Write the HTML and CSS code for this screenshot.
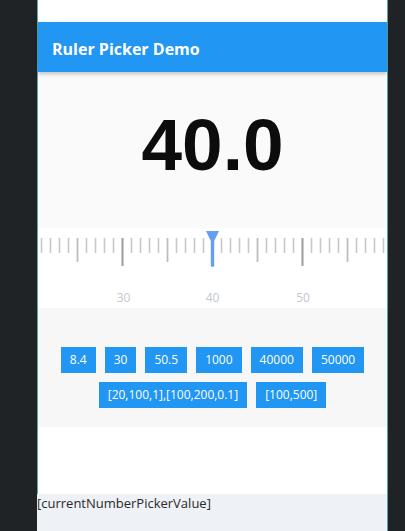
FILE: index.html
```html
<!DOCTYPE html>
<html>
<head>
<meta charset="utf-8">
<link rel="stylesheet" href="styles.css">
</head>
<body>
<div class="stage">
  <div class="side-left"></div>
  <div class="phone">
    <div class="status"></div>
    <header class="appbar">Ruler Picker Demo</header>
    <section class="display">
      <div class="value">40.0</div>
    </section>
    <section class="ruler">
      <svg class="ruler-svg" width="349" height="80" viewBox="0 0 349 80" xmlns="http://www.w3.org/2000/svg">
        <g id="ticks"></g>
        <g class="labels" font-size="12" fill="#c3c7cf" text-anchor="middle">
          <text x="85.5" y="74">30</text>
          <text x="174.5" y="74">40</text>
          <text x="265" y="74">50</text>
        </g>
        <path d="M168 3 L181 3 L176.2 13 L176.2 38 Q174.5 40 172.8 38 L172.8 13 Z" fill="#679ef3"/>
      </svg>
    </section>
    <section class="buttons">
      <div class="btn-row">
        <span class="btn">8.4</span>
        <span class="btn">30</span>
        <span class="btn">50.5</span>
        <span class="btn">1000</span>
        <span class="btn">40000</span>
        <span class="btn">50000</span>
      </div>
      <div class="btn-row">
        <span class="btn">[20,100,1],[100,200,0.1]</span>
        <span class="btn">[100,500]</span>
      </div>
    </section>
    <section class="blank"></section>
    <footer class="footer">[currentNumberPickerValue]</footer>
  </div>
  <div class="side-right"></div>
</div>
<script>
(function(){
  var g = document.getElementById('ticks');
  var ns = 'http://www.w3.org/2000/svg';
  for (var k = -19; k <= 19; k++) {
    var v = 40 + k;
    if (v === 40) continue;
    var x = 174.5 + 9 * k;
    var l = document.createElementNS(ns, 'line');
    var y2 = 25, c = '#c9c9c9', w = 1.6;
    if (v % 10 === 0) { y2 = 38; c = '#9c9c9c'; w = 2; }
    else if (v % 5 === 0) { y2 = 34; c = '#bdbdbd'; w = 1.8; }
    l.setAttribute('x1', x); l.setAttribute('x2', x);
    l.setAttribute('y1', 10); l.setAttribute('y2', y2);
    l.setAttribute('stroke', c); l.setAttribute('stroke-width', w);
    g.appendChild(l);
  }
})();
</script>
</body>
</html>
```

FILE: styles.css
```css
html, body {
  margin: 0;
  padding: 0;
  background: #1f2326;
  height: 100%;
  overflow: hidden;
}

.stage {
  display: flex;
  height: 531px;
}

.side-left {
  width: 37px;
  flex: none;
}

.side-right {
  flex: 1;
}

.phone {
  width: 349px;
  flex: none;
  border-left: 1px solid #5aa6a6;
  border-right: 1px solid #5aa6a6;
  background: #ffffff;
  display: flex;
  flex-direction: column;
  font-family: "Open Sans", "Noto Sans", sans-serif;
}

.status {
  height: 22px;
  background: #ffffff;
}

.appbar {
  height: 50px;
  box-sizing: border-box;
  background: #2196f3;
  color: #ffffff;
  font-weight: 700;
  font-size: 16px;
  line-height: 50px;
  padding-left: 14px;
  padding-top: 2px;
  box-shadow: 0 2px 4px rgba(0, 0, 0, 0.22);
  position: relative;
  z-index: 1;
}

.display {
  height: 156px;
  box-sizing: border-box;
  background: #fafafa;
  padding-top: 36px;
  text-align: center;
}

.value {
  font-family: "Liberation Sans", Arial, sans-serif;
  font-weight: 700;
  font-size: 73px;
  line-height: 73px;
  color: #0c0c0c;
}

.ruler {
  height: 80px;
  background: #ffffff;
}

.ruler-svg {
  display: block;
  font-family: "Open Sans", "Noto Sans", sans-serif;
}

.buttons {
  height: 119px;
  box-sizing: border-box;
  background: #f7f7f8;
  padding-top: 39px;
  display: flex;
  flex-direction: column;
  align-items: center;
  gap: 9px;
}

.btn-row {
  display: flex;
  gap: 9px;
  justify-content: center;
}

.btn {
  height: 26px;
  line-height: 26px;
  padding: 0 9px;
  background: #2196f3;
  color: #ffffff;
  font-size: 12px;
}

.blank {
  height: 67px;
  background: #ffffff;
}

.footer {
  flex: 1;
  background: #eef1f6;
  color: #2a2a2a;
  font-family: "Open Sans", "Noto Sans", sans-serif;
  font-size: 13px;
  line-height: 18px;
  padding-top: 0;
  margin-left: -1px;
}
```
